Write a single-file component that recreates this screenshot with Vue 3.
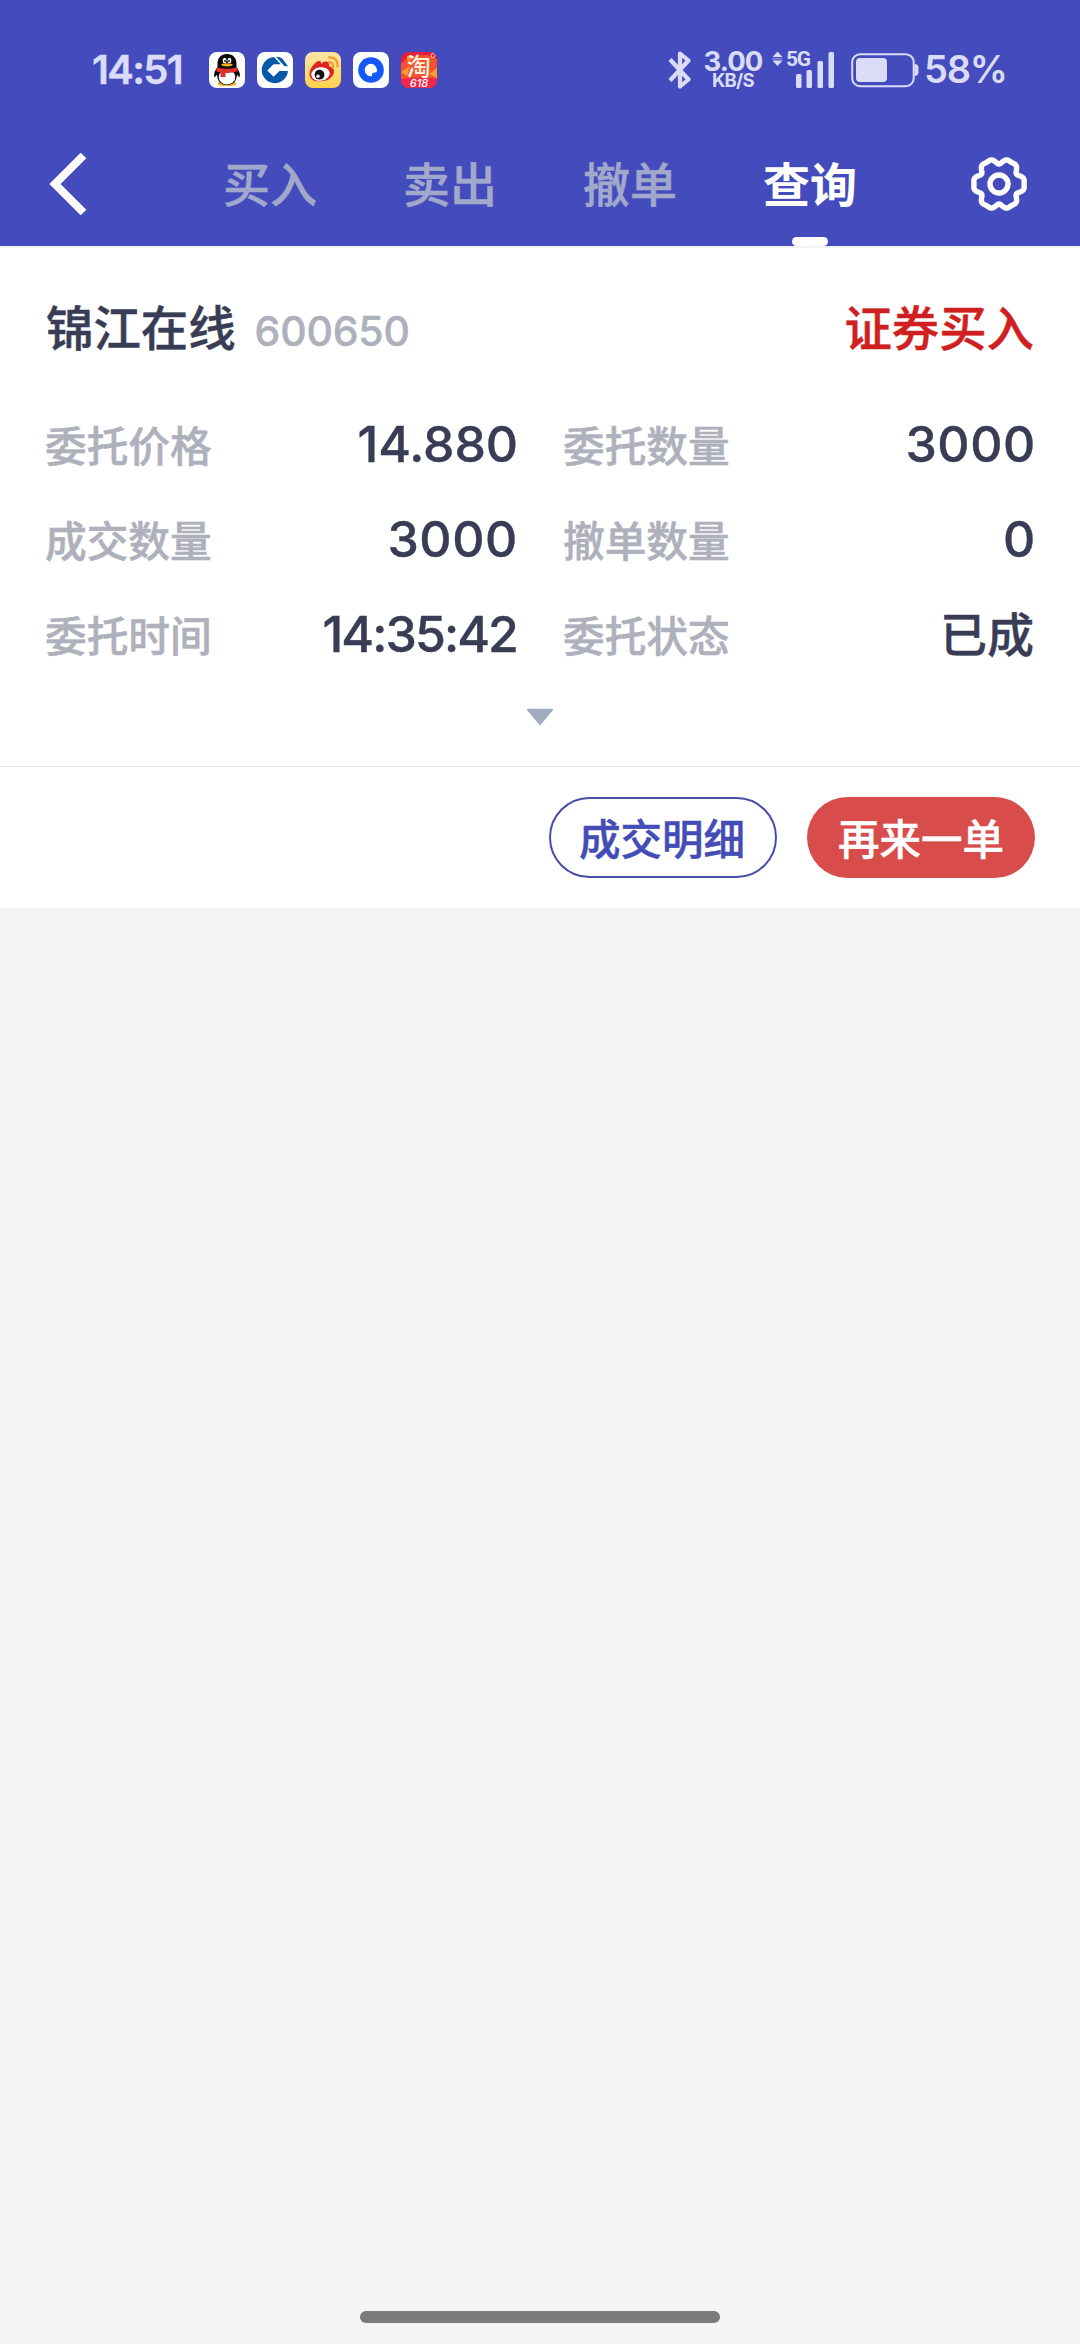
<template>
  <div class="page">
    <header class="top">
      <div class="status-bar">
        <span class="clock">14:51</span>
        <div class="apps">
          <svg class="app" viewBox="0 0 36 36">
            <rect width="36" height="36" rx="8" fill="#fff" />
            <path d="M8.500 32q1-3 5-2l4.500 2 4.500-2q4-1 5 2-1 2-9.500 2t-9.500-2z" fill="#eeb021" />
            <path d="M18 2c-6 0-9.500 4-9.500 9.500v3.500c-2 3-4 6-3.300 9.500.4 1.200 1.800-.2 2.800-2 .4 7 4 10.500 10 10.500s9.600-3.500 10-10.500c1 1.800 2.400 3.200 2.800 2 .7-3.500-1.300-6.500-3.300-9.500v-3.500C27.500 6 24 2 18 2z" fill="#0a0a0c" />
            <ellipse cx="18" cy="25" rx="8.300" ry="7.600" fill="#fff" />
            <ellipse cx="15.600" cy="8.500" rx="1.900" ry="2.700" fill="#fff" />
            <ellipse cx="20.400" cy="8.500" rx="1.900" ry="2.700" fill="#fff" />
            <circle cx="16" cy="9" r="0.900" fill="#000" />
            <circle cx="20" cy="9" r="0.900" fill="#000" />
            <ellipse cx="18" cy="12.800" rx="5.800" ry="1.600" fill="#f2ac18" />
            <path d="M8 15.300q10 3 20 0l.8 4q-6 2-12.300 1.600V25H11.500v-4.500q-2.500-.5-4.300-1.500z" fill="#df2f31" />
          </svg>
          <svg class="app" viewBox="0 0 36 36">
            <rect width="36" height="36" rx="8" fill="#fff" />
            <path d="M17 5A13.100 13.100 0 1 0 30.900 19H22.500l-6 5.800-6.200-6.300 6.200-6.200h7.300z" fill="#0559a8" />
            <path d="M19 4.800q4.500 0 6.500 2l5.500 7.400h-3.500z" fill="#0559a8" />
          </svg>
          <svg class="app" viewBox="0 0 36 36">
            <defs>
              <linearGradient id="weibo" x2="0" y2="1">
                <stop stop-color="#fde4a6" />
                <stop offset="1" stop-color="#fdd24c" />
              </linearGradient>
            </defs>
            <rect width="36" height="36" rx="8" fill="url(#weibo)" />
            <path d="M14 9c2 0 2.500 1.500 2 3 4-4 9-3 8 2 4 1.500 6 4.500 4.500 8-2 5-8 7.500-13.500 7.200C8.500 30 4.500 27 4.500 22 4.500 17 10 9.500 14 9z" fill="#dc2420" />
            <ellipse cx="15.500" cy="22" rx="9.300" ry="6.800" fill="#fff" transform="rotate(-8 15.500 22)" />
            <circle cx="14.500" cy="22.700" r="4.900" fill="#111" />
            <circle cx="13" cy="24.200" r="1.700" fill="#fff" />
            <path d="M24 10q4.500 0 4 5M24 5.500q9-.5 8.500 9" fill="none" stroke="#f29b28" stroke-width="2.200" stroke-linecap="round" />
          </svg>
          <svg class="app" viewBox="0 0 36 36">
            <rect width="36" height="36" rx="8" fill="#fff" />
            <circle cx="18" cy="18" r="12.800" fill="#1457fb" />
            <path d="M18 11.800a6.200 6.200 0 1 0 1 12.300v-2.600l2.500-1 2-.2A6.200 6.200 0 0 0 18 11.800z" fill="#fff" />
          </svg>
          <svg class="app" viewBox="0 0 36 36">
            <defs>
              <clipPath id="taoClip"><rect width="36" height="36" rx="8" /></clipPath>
            </defs>
            <g clip-path="url(#taoClip)">
              <rect width="36" height="36" fill="#f5532c" />
              <path d="M0 0h36v7L26 3 8 4 0 12z" fill="#e51c3c" />
              <path d="M0 20l9-6-3 10zM28 22l8-6v10z" fill="#fb9b32" />
              <path d="M0 27q18-3 36 0v9H0z" fill="#f0264c" />
              <circle cx="8" cy="6" r="2.400" fill="#fb9b32" />
              <circle cx="32" cy="3.500" r="2" fill="none" stroke="#ffd9cc" />
            </g>
            <text x="17.800" y="22.500" class="tao">淘</text>
            <text x="18" y="35" class="sale">618</text>
          </svg>
        </div>
        <div class="system">
          <svg class="bluetooth" viewBox="0 0 24 38">
            <path d="M2 8.500l18.500 20L12 35.500V2.500l8.500 7L2 29.500" />
          </svg>
          <div class="speed">
            <span class="speed-num">3.00</span>
            <span class="speed-unit">KB/S</span>
          </div>
          <svg class="arrows" viewBox="0 0 11 38">
            <path d="M0.500 6L5.500 0.500l5 5.500zM0.500 9.500L5.500 15l5-5.500z" />
            <path d="M0.500 7.200h10v1.200h-10z" opacity="0.600" />
          </svg>
          <span class="network">5G</span>
          <svg class="signal" viewBox="0 0 40 38">
            <rect x="0" y="23" width="5.500" height="14" rx="1.500" />
            <rect x="10.500" y="19" width="5.500" height="18" rx="1.500" />
            <rect x="21.500" y="10" width="5.500" height="27" rx="1.500" />
            <rect x="32.500" y="1" width="5.500" height="36" rx="1.500" />
          </svg>
          <svg class="battery" viewBox="0 0 68 36">
            <rect x="1.200" y="2.200" width="61.500" height="32" rx="8" fill="none" stroke="#d9dbf7" stroke-width="2" />
            <rect x="5" y="6" width="31" height="24" rx="4" />
            <path d="M63.500 12q4 0 4 4v4q0 4-4 4z" />
          </svg>
          <span class="percent">58%</span>
        </div>
      </div>
      <nav class="nav">
        <svg class="back" viewBox="0 0 38 64">
          <path d="M34.500 3.500L6 32l28.500 28.500" />
        </svg>
        <div class="tabs">
          <span
            v-for="t in tabs"
            :key="t"
            class="tab"
            :class="{ active: t === current }"
            @click="current = t"
          >{{ t }}</span>
        </div>
        <svg class="gear" viewBox="-30 -30 60 60">
          <path :d="gearPath" />
          <circle r="9" />
        </svg>
      </nav>
    </header>

    <section class="order">
      <div class="order-head">
        <span class="stock">锦江在线</span>
        <span class="code">600650</span>
        <span class="side">证券买入</span>
      </div>
      <div class="grid">
        <div v-for="f in fields" :key="f.label" class="field">
          <span class="label">{{ f.label }}</span>
          <span class="value" :class="f.type">{{ f.value }}</span>
        </div>
      </div>
      <svg class="more" viewBox="0 0 28 18">
        <path d="M1.500 1.500h25L14 16.500z" />
      </svg>
      <div class="actions">
        <button class="btn outline">成交明细</button>
        <button class="btn solid">再来一单</button>
      </div>
    </section>

    <div class="home-bar"></div>
  </div>
</template>

<script setup>
import { ref } from 'vue'

const tabs = ['买入', '卖出', '撤单', '查询']
const current = ref('查询')

const fields = [
  { label: '委托价格', value: '14.880', type: 'price' },
  { label: '委托数量', value: '3000', type: 'num' },
  { label: '成交数量', value: '3000', type: 'num' },
  { label: '撤单数量', value: '0', type: 'num' },
  { label: '委托时间', value: '14:35:42', type: 'time' },
  { label: '委托状态', value: '已成', type: 'cjk' },
]

// 六齿齿轮轮廓
const gearPath = (() => {
  const pts = []
  for (let i = 0; i < 180; i++) {
    const a = (i / 180) * Math.PI * 2
    const r = 23.6 + 2.5 * Math.cos(6 * a) - 1.1 * Math.cos(12 * a)
    pts.push(`${(r * Math.cos(a)).toFixed(2)} ${(r * Math.sin(a)).toFixed(2)}`)
  }
  return `M${pts.join('L')}Z`
})()
</script>

<style>
body { background: #f3f4f6; }
</style>

<style scoped>
.page {
  display: flex;
  flex-direction: column;
  height: 2344px;
  background: #f3f4f6;
  font-family: Inter, "Noto Sans CJK SC", sans-serif;
  font-weight: 500;
  overflow: hidden;
}
.top {
  display: flex;
  flex-direction: column;
  height: 246px;
  flex-shrink: 0;
  background: #444cbd;
}
.status-bar {
  display: flex;
  align-items: center;
  height: 122px;
  padding: 18px 76px 0 92px;
  box-sizing: border-box;
  color: #d9dbf7;
}
.clock {
  width: 117px;
  margin-top: -2px;
  font-size: 40px;
  font-weight: 600;
  letter-spacing: -1.7px;
  -webkit-text-stroke: 0.4px;
}
.apps { display: flex; gap: 12px; }
.app { width: 36px; height: 36px; display: block; overflow: visible; }
.tao { font-size: 24px; font-weight: 500; fill: #fff3e0; text-anchor: middle; }
.sale { font-size: 11px; font-weight: 500; font-style: italic; fill: #fff; text-anchor: middle; }
.system { display: flex; align-items: center; margin-left: auto; margin-top: -1px; }
.bluetooth { width: 24px; height: 38px; fill: none; stroke: #d9dbf7; stroke-width: 4.2; stroke-linejoin: round; }
.speed { display: flex; flex-direction: column; align-items: center; width: 60px; margin: -1px 9px 0 11px; }
.speed-num { font-size: 27.5px; line-height: 22px; font-weight: 700; letter-spacing: -0.9px; }
.speed-unit { font-size: 18.5px; line-height: 17px; font-weight: 700; letter-spacing: -0.7px; }
.arrows { width: 11px; height: 38px; fill: #d9dbf7; }
.network {
  align-self: flex-start;
  margin: 0 -14px 0 3px;
  width: 24px;
  font-family: Roboto, sans-serif;
  font-size: 21px;
  line-height: 24px;
  font-weight: 700;
  letter-spacing: -1.2px;
}
.signal { width: 40px; height: 38px; fill: #d9dbf7; }
.battery { width: 68px; height: 36px; margin: 0 5px 0 15px; fill: #d9dbf7; }
.percent { width: 80px; margin-top: -1px; font-size: 38px; font-weight: 600; letter-spacing: -1.2px; }

.nav { display: flex; height: 124px; }
.back { width: 38px; height: 64px; margin: 30px 93px 0 49px; fill: none; stroke: #fff; stroke-width: 8; }
.tabs { display: flex; }
.tab {
  display: flex;
  flex-direction: column;
  align-items: center;
  width: 180px;
  line-height: 126px;
  height: 124px;
  font-size: 47px;
  color: #a1a9cb;
  -webkit-text-stroke: 0.5px;
}
.tab.active { color: #fff; font-weight: 700; -webkit-text-stroke: 0; }
.tab.active::after {
  content: '';
  width: 36px;
  height: 9px;
  margin-top: -11px;
  border-radius: 4.5px;
  background: #fff;
  flex-shrink: 0;
}
.gear { width: 60px; height: 60px; margin: 32px 0 0 69px; fill: none; stroke: #fff; stroke-width: 5.4; }

.order {
  display: flex;
  flex-direction: column;
  height: 662px;
  flex-shrink: 0;
  box-sizing: border-box;
  border-top: 2px solid #f3f4f7;
  background: #fff;
}
.order-head { display: flex; align-items: center; height: 160px; padding: 0 46px; }
.stock,
.side { margin-top: -5px; font-size: 47.4px; color: #383c54; -webkit-text-stroke: 0.5px; }
.side { margin-left: auto; color: #cf1f20; }
.code { margin: 5px 0 0 19px; font-size: 41px; letter-spacing: -0.2px; color: #aeb0bc; -webkit-text-stroke: 0.4px; }
.grid {
  display: grid;
  grid-template-columns: 1fr 1fr;
  grid-auto-rows: 95px;
  column-gap: 46px;
  margin-top: -11px;
  padding: 0 45px;
}
.field { display: flex; align-items: center; justify-content: space-between; }
.label { margin-top: -2px; font-size: 41.7px; color: #aeb0bc; -webkit-text-stroke: 0.5px; }
.value { font-size: 50px; color: #383c54; -webkit-text-stroke: 0.4px; }
.value.price { margin: -2px -1px 0 0; letter-spacing: -0.1px; }
.value.num { margin: -2px -1px 0 0; letter-spacing: 0.6px; }
.value.time { margin-top: -2px; letter-spacing: -1.9px; }
.value.cjk { margin: -7px 1px 0 0; font-size: 47px; }
.more {
  width: 28px;
  height: 18px;
  margin: 26px auto 0;
  fill: #a2acc0;
  stroke: #a2acc0;
  stroke-width: 1.5;
  stroke-linejoin: round;
}
.actions {
  display: flex;
  justify-content: flex-end;
  gap: 30px;
  height: 142px;
  margin-top: auto;
  padding: 30px 45px 0;
  box-sizing: border-box;
  border-top: 1px solid #e1e2e4;
}
.btn {
  display: flex;
  align-items: center;
  justify-content: center;
  width: 228px;
  height: 81px;
  padding: 5px 0 0;
  box-sizing: border-box;
  border-radius: 41px;
  font: inherit;
  font-size: 41.5px;
  line-height: 60px;
  -webkit-text-stroke: 0.5px;
}
.btn.outline { border: 2px solid #464ea8; padding-right: 2px; background: #fff; color: #444cb5; }
.btn.solid { border: 0; background: #d84c4b; color: #fff; }
.home-bar { width: 360px; height: 12px; margin: auto auto 21px; border-radius: 6px; background: #7b7b7b; flex-shrink: 0; }
</style>
